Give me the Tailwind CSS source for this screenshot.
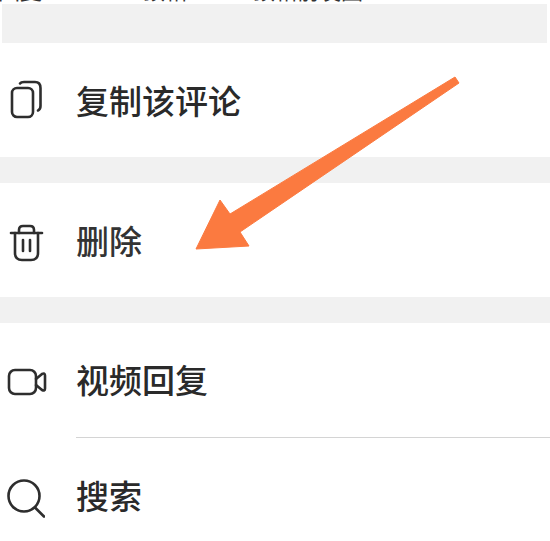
<!DOCTYPE html>
<html>
<head>
<meta charset="utf-8">
<script src="https://cdn.jsdelivr.net/npm/@tailwindcss/browser@4"></script>
</head>
<body class="bg-white">
<div class="relative w-[550px] h-[541px] overflow-hidden bg-white text-[#2a2a2a] font-['Liberation_Sans','Noto_Sans_CJK_SC',sans-serif]">
  <div class="h-[4px] overflow-hidden relative">
    <div class="flex text-[22px] leading-[22px] -mt-[19px] text-[#333]">
      <span class="ml-[-2px] w-[145px]">回复</span>
      <span class="w-[110px]">顶帖</span>
      <span class="w-[185px]">顶帖前发圈</span>
      <span class="text-[#999] text-[16px]">设置</span>
    </div>
  </div>
  <div class="h-[39px] bg-[#f1f1f1] ml-[2px] mr-[3px]"></div>

  <div class="h-[114px] flex items-center pl-[10px]">
    <svg class="w-[32px] h-[40px] shrink-0" viewBox="0 0 32 40" fill="none" stroke="#2e2e2e" stroke-width="2.6" stroke-linecap="round" stroke-linejoin="round">
      <rect x="2" y="8" width="21" height="29" rx="5"/>
      <path d="M10 3.5 Q11 2 14 2 H25 Q30.5 2 30.5 8 V26 Q30.5 29.5 28 30.5"/>
    </svg>
    <span class="ml-[34px] pt-[5px] text-[33px] font-medium leading-none text-[#2a2a2a]">复制该评论</span>
  </div>
  <div class="h-[26px] bg-[#f1f1f1]"></div>

  <div class="h-[114px] flex items-center pl-[9px] pt-[5px]">
    <svg class="w-[35px] h-[38px] shrink-0" viewBox="0 0 35 38" fill="none" stroke="#2e2e2e" stroke-width="2.6" stroke-linecap="round" stroke-linejoin="round">
      <path d="M2 9 H33"/>
      <path d="M10 9 V6 Q10 2 14 2 H21 Q25 2 25 6 V9"/>
      <path d="M6 9 V29 Q6 36 13 36 H22 Q29 36 29 29 V9"/>
      <path d="M14 16 V27"/>
      <path d="M21 16 V27"/>
    </svg>
    <span class="ml-[32px] text-[33px] font-medium leading-none text-[#333]">删除</span>
  </div>
  <div class="h-[26px] bg-[#f1f1f1]"></div>

  <div class="h-[115px] flex items-center pl-[7px] pt-[2px] relative">
    <svg class="w-[40px] h-[28px] shrink-0" viewBox="0 0 40 28" fill="none" stroke="#2e2e2e" stroke-width="2.6" stroke-linecap="round" stroke-linejoin="round">
      <rect x="2" y="2" width="27" height="24" rx="6"/>
      <path d="M29 11 L35 6 Q38 4.5 38 7.5 V20.5 Q38 23.5 35 22 L29 17"/>
    </svg>
    <span class="ml-[29px] text-[33px] font-medium leading-none text-[#2a2a2a]">视频回复</span>
    <div class="absolute left-[76px] right-0 bottom-0 h-[1px] bg-[#d4d4d4]"></div>
  </div>

  <div class="h-[103px] flex items-center pl-[6px] pt-[16px]">
    <svg class="w-[39px] h-[40px] shrink-0" viewBox="0 0 39 40" fill="none" stroke="#2e2e2e" stroke-width="2.6" stroke-linecap="round" stroke-linejoin="round">
      <circle cx="18" cy="18" r="15.5"/>
      <path d="M29 29.5 L38 38.5"/>
    </svg>
    <span class="ml-[31px] text-[33px] font-medium leading-none text-[#2a2a2a]">搜索</span>
  </div>

  <svg class="absolute left-0 top-0 w-[550px] h-[541px] pointer-events-none" viewBox="0 0 550 541">
    <path d="M455 77 L459 83 L240 232 L249 246 L196 249 L220 200 L230 214 Z" fill="#fb7a40" stroke="#fb7a40" stroke-width="1" stroke-linejoin="round"/>
  </svg>
</div>
</body>
</html>
